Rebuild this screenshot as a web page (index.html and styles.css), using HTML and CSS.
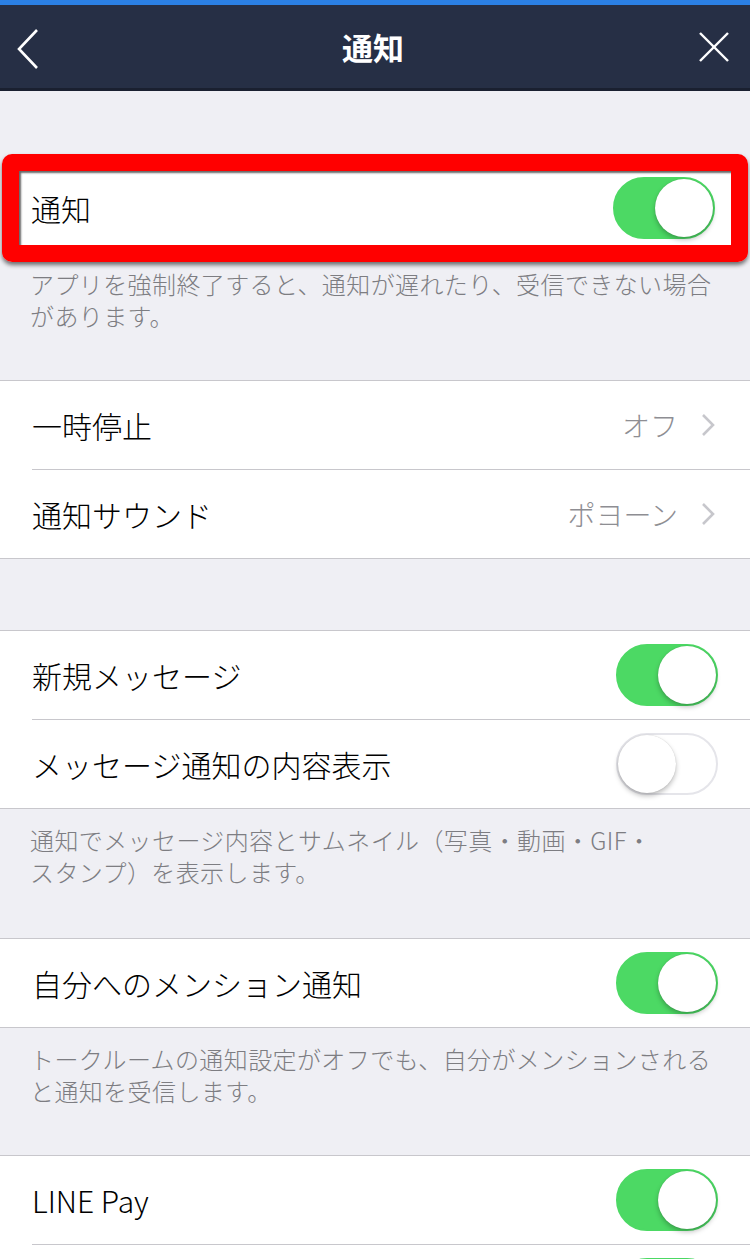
FILE: index.html
```html
<!DOCTYPE html>
<html lang="ja">
<head>
    <meta charset="UTF-8">
    <meta name="viewport" content="width=device-width, initial-scale=1.0">
    <title>通知</title>
    <link rel="stylesheet" href="styles.css">
</head>
<body>
    <div class="status-strip"></div>
    <header class="nav">
        <svg class="nav-back" width="24" height="42" viewBox="0 0 24 42">
            <polyline points="21,2 3,21 21,40" fill="none" stroke="#fff" stroke-width="2.6"/>
        </svg>
        <h1 class="nav-title">通知</h1>
        <svg class="nav-close" width="32" height="32" viewBox="0 0 32 32">
            <line x1="2" y1="2" x2="30" y2="30" stroke="#fff" stroke-width="2.4"/>
            <line x1="30" y1="2" x2="2" y2="30" stroke="#fff" stroke-width="2.4"/>
        </svg>
    </header>

    <main class="settings">
        <div class="highlight">
            <div class="highlight-row">
                <span class="label">通知</span>
                <span class="toggle on"></span>
            </div>
        </div>
        <p class="note note-first">アプリを強制終了すると、通知が遅れたり、受信できない場合があります。</p>

        <div class="group">
            <div class="row">
                <span class="label">一時停止</span>
                <span class="value">オフ</span>
                <svg class="chevron" width="16" height="24" viewBox="0 0 16 24">
                    <polyline points="3,2 13,12 3,22" fill="none" stroke="#c7c7cc" stroke-width="2.6"/>
                </svg>
            </div>
            <div class="row">
                <span class="label">通知サウンド</span>
                <span class="value">ポヨーン</span>
                <svg class="chevron" width="16" height="24" viewBox="0 0 16 24">
                    <polyline points="3,2 13,12 3,22" fill="none" stroke="#c7c7cc" stroke-width="2.6"/>
                </svg>
            </div>
        </div>

        <div class="group">
            <div class="row">
                <span class="label">新規メッセージ</span>
                <span class="toggle on"></span>
            </div>
            <div class="row">
                <span class="label">メッセージ通知の内容表示</span>
                <span class="toggle"></span>
            </div>
        </div>
        <p class="note">通知でメッセージ内容とサムネイル（写真・動画・GIF・<br>スタンプ）を表示します。</p>

        <div class="group">
            <div class="row">
                <span class="label">自分へのメンション通知</span>
                <span class="toggle on"></span>
            </div>
        </div>
        <p class="note note-short">トークルームの通知設定がオフでも、自分がメンションされると通知を受信します。</p>

        <div class="group">
            <div class="row">
                <span class="label">LINE Pay</span>
                <span class="toggle on"></span>
            </div>
            <div class="row">
                <span class="label"></span>
                <span class="toggle on"></span>
            </div>
        </div>
    </main>
</body>
</html>
```

FILE: styles.css
```css
html, body {
    overflow: hidden;
}
body {
    margin: 0;
    background-color: #efeff4;
    font-family: "Noto Sans CJK JP", "Noto Sans", sans-serif;
    font-weight: 300;
    color: #000;
}
.status-strip {
    height: 5px;
    background-color: #2b80e4;
}
.nav {
    display: flex;
    align-items: center;
    justify-content: space-between;
    height: 83px;
    padding: 0 20px 0 16px;
    background-color: #262f45;
    border-bottom: 3px solid #1a2030;
}
.nav-title {
    margin: 0 0 0 8px;
    font-size: 31px;
    font-weight: bold;
    color: #fff;
}
.nav-back {
    margin-top: 4px;
}
.settings {
    padding-top: 63px;
}
.highlight {
    margin: 0 2px;
    border: 17px solid #ff0000;
    border-radius: 10px;
    box-shadow: 0 3px 4px rgba(0, 0, 0, 0.55);
}
.highlight-row {
    display: flex;
    align-items: center;
    justify-content: space-between;
    height: 74px;
    padding: 0 16px 0 12px;
    background-color: #fff;
    box-shadow: inset 2px 2px 2px rgba(0, 0, 0, 0.6);
}
.label {
    font-size: 30px;
    flex: 1;
}
.note {
    margin: 0;
    padding: 15px 30px 50px;
    font-size: 24px;
    letter-spacing: 0.4px;
    line-height: 32px;
    color: #7d7d82;
}
.note-first {
    padding-top: 6px;
    padding-bottom: 48px;
}
.note-short {
    padding-bottom: 48px;
}
.group {
    background-color: #fff;
    border-top: 1px solid #c8c7cc;
    border-bottom: 1px solid #c8c7cc;
}
.group + .group {
    margin-top: 71px;
}
.row {
    display: flex;
    align-items: center;
    height: 88px;
    margin-left: 32px;
    padding-right: 32px;
    border-bottom: 1px solid #c8c7cc;
}
.row:last-child {
    border-bottom: none;
}
.value {
    font-size: 28px;
    color: #8e8e93;
    margin-right: 22px;
}
.chevron {
    margin-right: 2px;
}
.toggle {
    position: relative;
    box-sizing: border-box;
    width: 102px;
    height: 62px;
    border-radius: 31px;
    border: 2px solid #e5e5ea;
    background-color: #fff;
}
.toggle::after {
    content: "";
    position: absolute;
    top: 0;
    left: 0;
    width: 58px;
    height: 58px;
    border-radius: 50%;
    background-color: #fff;
    box-shadow: 0 3px 5px rgba(0, 0, 0, 0.25), 0 0 1px rgba(0, 0, 0, 0.2);
}
.toggle.on {
    border-color: #4cd964;
    background-color: #4cd964;
}
.toggle.on::after {
    left: 40px;
}
```
